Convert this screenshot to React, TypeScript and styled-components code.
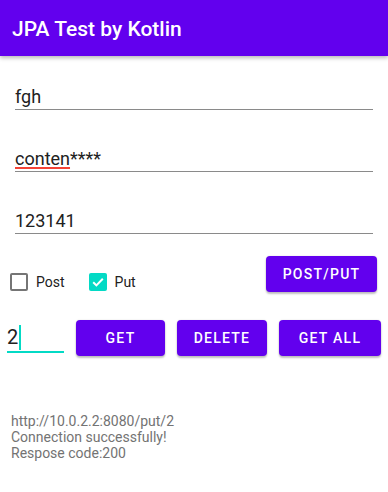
import React from 'react'
import styled, { createGlobalStyle } from 'styled-components'

const GlobalStyle = createGlobalStyle`
  html, body {
    margin: 0;
    padding: 0;
    background: #fff;
  }

  body {
    font-family: Roboto, 'Noto Sans', sans-serif;
  }
`

const Screen = styled.div`
  width: 388px;
  height: 492px;
  background: #fff;
  display: flex;
  flex-direction: column;
  overflow: hidden;
`

const AppBar = styled.header`
  flex: none;
  height: 56px;
  box-sizing: border-box;
  padding: 1px 12px 0;
  display: flex;
  align-items: center;
  background: #6200ee;
  box-shadow: 0 2px 4px rgba(0, 0, 0, 0.28);
  position: relative;
  z-index: 1;
`

const Title = styled.h1`
  margin: 0;
  font-size: 21px;
  font-weight: 500;
  line-height: 24px;
  color: #fff;
`

const Form = styled.div`
  padding: 29px 15px 0;
  display: flex;
  flex-direction: column;
  gap: 37px;
`

const Field = styled.div`
  height: 24px;
  border-bottom: 1px solid #8a8a8a;
  font-size: 18px;
  line-height: 24px;
  color: #212121;
  white-space: nowrap;
`

const Misspelled = styled.span`
  text-decoration-line: underline;
  text-decoration-color: #f44336;
  text-decoration-thickness: 2px;
  text-underline-offset: 2px;
`

const OptionsRow = styled.div`
  margin-top: 22px;
  padding: 0 11px 0 10px;
  display: flex;
  align-items: flex-end;
  justify-content: space-between;
`

const CheckGroup = styled.div`
  display: flex;
  align-items: center;
  gap: 24px;
  margin-bottom: 1px;
`

const Option = styled.label`
  display: flex;
  align-items: center;
  gap: 8px;
  font-size: 14px;
  line-height: 18px;
  color: #212121;
`

const Box = styled.span<{ $checked?: boolean }>`
  width: 18px;
  height: 18px;
  box-sizing: border-box;
  border-radius: 2px;
  border: ${(p) => (p.$checked ? 'none' : '2px solid #757575')};
  background: ${(p) => (p.$checked ? '#03dac5' : 'transparent')};
  display: flex;
  align-items: center;
  justify-content: center;
`

const Button = styled.button<{ $width: number }>`
  width: ${(p) => p.$width}px;
  height: 36px;
  flex: none;
  padding: 0;
  border: none;
  border-radius: 4px;
  background: #6200ee;
  color: #fff;
  font-family: Roboto, 'Noto Sans', sans-serif;
  font-size: 14px;
  font-weight: 500;
  letter-spacing: 1.25px;
  text-transform: uppercase;
  box-shadow: 0 2px 2px rgba(0, 0, 0, 0.24), 0 0 2px rgba(0, 0, 0, 0.12);
`

const ActionRow = styled.div`
  margin-top: 28px;
  padding: 0 7px;
  display: flex;
  align-items: center;
  gap: 12px;
`

const IdField = styled.div`
  width: 57px;
  height: 30px;
  box-sizing: border-box;
  border-bottom: 2px solid #03dac5;
  display: flex;
  align-items: center;
  font-size: 20px;
  line-height: 28px;
  color: #212121;
`

const Cursor = styled.span`
  width: 2px;
  height: 25px;
  margin-left: 1px;
  background: #03dac5;
`

const Log = styled.div`
  margin-top: 57px;
  padding-left: 11px;
  font-size: 14px;
  line-height: 16px;
  color: #737373;
`

const Check = () => (
  <svg width="14" height="14" viewBox="0 0 14 14">
    <polyline
      points="2.2,7.2 5.4,10.4 11.8,3.8"
      fill="none"
      stroke="#fff"
      strokeWidth="2"
    />
  </svg>
)

const logLines = [
  'http://10.0.2.2:8080/put/2',
  'Connection successfully!',
  'Respose code:200',
]

export default function App() {
  return (
    <Screen>
      <GlobalStyle />
      <AppBar>
        <Title>JPA Test by Kotlin</Title>
      </AppBar>
      <Form>
        <Field>fgh</Field>
        <Field>
          <Misspelled>conten</Misspelled>****
        </Field>
        <Field>123141</Field>
      </Form>
      <OptionsRow>
        <CheckGroup>
          <Option>
            <Box />
            Post
          </Option>
          <Option>
            <Box $checked>
              <Check />
            </Box>
            Put
          </Option>
        </CheckGroup>
        <Button $width={111}>Post/Put</Button>
      </OptionsRow>
      <ActionRow>
        <IdField>
          2<Cursor />
        </IdField>
        <Button $width={89}>Get</Button>
        <Button $width={90}>Delete</Button>
        <Button $width={102}>Get All</Button>
      </ActionRow>
      <Log>
        {logLines.map((line) => (
          <div key={line}>{line}</div>
        ))}
      </Log>
    </Screen>
  )
}
